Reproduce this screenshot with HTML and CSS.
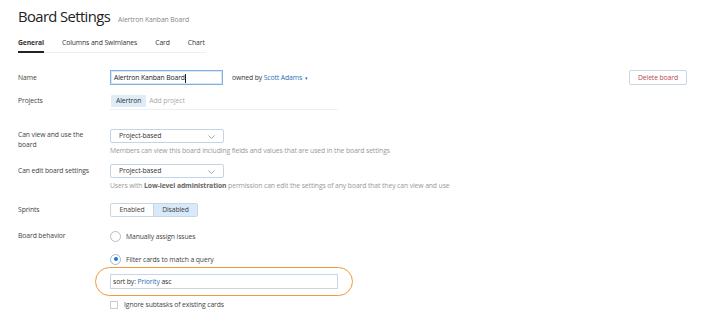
FILE: index.html
```html
<!DOCTYPE html>
<html>
<head>
<meta charset="utf-8">
<link rel="stylesheet" href="styles.css">
</head>
<body>
<div class="page">
  <div class="header">
    <h1 class="title">Board Settings</h1>
    <span class="subtitle">Alertron Kanban Board</span>
  </div>
  <div class="tabs">
    <span class="tab active">General</span>
    <span class="tab">Columns and Swimlanes</span>
    <span class="tab">Card</span>
    <span class="tab">Chart</span>
  </div>

  <div class="row row-name">
    <div class="label">Name</div>
    <div class="field name-field">
      <div class="text-input focused">Alertron Kanban Board<span class="caret"></span></div>
      <span class="owner">owned by <a class="link">Scott Adams</a> <span class="tri">▾</span></span>
    </div>
    <button class="btn-delete">Delete board</button>
  </div>

  <div class="row row-projects">
    <div class="label">Projects</div>
    <div class="field">
      <div class="project-picker">
        <span class="tag">Alertron</span><span class="placeholder">Add project</span>
      </div>
    </div>
  </div>

  <div class="row row-view">
    <div class="label">Can view and use the board</div>
    <div class="field">
      <div class="select">Project-based<svg class="chev" width="7" height="4" viewBox="0 0 7 4"><path d="M0.5 0.5 L3.5 3.5 L6.5 0.5" fill="none" stroke="#8a8f99" stroke-width="0.8"/></svg></div>
      <div class="help">Members can view this board including fields and values that are used in the board settings</div>
    </div>
  </div>

  <div class="row row-edit">
    <div class="label">Can edit board settings</div>
    <div class="field">
      <div class="select">Project-based<svg class="chev" width="7" height="4" viewBox="0 0 7 4"><path d="M0.5 0.5 L3.5 3.5 L6.5 0.5" fill="none" stroke="#8a8f99" stroke-width="0.8"/></svg></div>
      <div class="help">Users with <b>Low-level administration</b> permission can edit the settings of any board that they can view and use</div>
    </div>
  </div>

  <div class="row row-sprints">
    <div class="label">Sprints</div>
    <div class="field">
      <div class="toggle"><span class="opt">Enabled</span><span class="opt on">Disabled</span></div>
    </div>
  </div>

  <div class="row row-behavior">
    <div class="label">Board behavior</div>
    <div class="field">
      <div class="radio-line"><span class="radio"></span>Manually assign issues</div>
      <div class="radio-line second"><span class="radio checked"></span>Filter cards to match a query</div>
      <div class="query-wrap">
        <div class="query">sort by: <span class="kw">Priority</span> asc</div>
        <span class="ring"></span>
      </div>
      <div class="check-line"><span class="checkbox"></span>Ignore subtasks of existing cards</div>
    </div>
  </div>
</div>
</body>
</html>
```
FILE: styles.css
```css
* { box-sizing: border-box; }
html, body { margin: 0; padding: 0; background: #fff; }
body {
  font-family: "Open Sans", "Noto Sans", sans-serif;
  color: #333;
  font-size: 6.8px;
  letter-spacing: -0.1px;
}
.page { padding: 0 19px 0 18px; width: 706px; }

.header { display: flex; align-items: baseline; padding-top: 6px; height: 33px; }
.title { font-weight: 400; font-size: 14.8px; margin: 0; color: #222; letter-spacing: -0.6px; }
.subtitle { font-size: 6.8px; color: #888; margin-left: 8px; }

.tabs { display: flex; width: 188px; border-bottom: 1px solid #eceef1; height: 20px; align-items: center; white-space: nowrap; }
.tab { margin-right: 18px; height: 20px; line-height: 20px; color: #333; }
.tab.active { font-weight: 700; border-bottom: 2px solid #222; margin-bottom: -1px; }

.row { display: flex; align-items: flex-start; }
.label { width: 92px; flex: none; color: #444; line-height: 10px; padding-right: 12px; }
.field { flex: 1; }

.row-name { margin-top: 17px; align-items: center; }
.name-field { display: flex; align-items: center; }
.text-input {
  width: 113px; height: 15px; border: 1px solid #7fb0e0; box-shadow: 0 0 0 1px #d6e7f8 inset;
  line-height: 13px; padding-left: 3px; color: #222; position: relative;
}
.caret { display: inline-block; width: 1px; height: 9px; background: #222; vertical-align: middle; }
.owner { margin-left: 9px; color: #333; }
.link { color: #2a6fb6; }
.tri { color: #2a6fb6; font-size: 5px; vertical-align: middle; margin-left: 1px; }
.btn-delete {
  width: 58px; height: 15px; border: 1px solid #c9d6e4; background: #fff; color: #c0474d;
  font-family: inherit; font-size: 6.8px; letter-spacing: -0.1px; padding: 0; border-radius: 2px;
}

.row-projects { margin-top: 10px; }
.row-projects .label { padding-top: 1px; }
.project-picker { width: 228px; height: 15px; border-bottom: 1px solid #eef0f2; display: flex; align-items: flex-start; padding-left: 1px; }
.tag { background: #deecf8; color: #333; padding: 0 5px; height: 12px; line-height: 12px; border-radius: 1px; }
.placeholder { color: #aaa; margin-left: 3px; line-height: 12px; }

.row-view { margin-top: 19px; }
.row-view .label { margin-top: 1px; }
.select {
  width: 114px; height: 14px; border: 1px solid #c3d4e5; border-radius: 2px; padding-left: 8px;
  line-height: 12px; display: flex; align-items: center; justify-content: space-between; padding-right: 8px; color: #333;
}
.chev { margin-top: 1px; }
.help { color: #999; margin-top: 3px; line-height: 10px; white-space: nowrap; }
.help b { color: #666; }

.row-edit { margin-top: 8px; }
.row-edit .label { padding-top: 2px; }

.row-sprints { margin-top: 12px; align-items: center; }
.toggle { display: inline-flex; border: 1px solid #c8d6e4; border-radius: 2px; height: 14px; }
.opt { width: 42px; text-align: center; line-height: 12px; color: #444; }
.opt.on { width: 44px; background: #d8e9f9; border-left: 1px solid #c8d6e4; }

.row-behavior { margin-top: 13px; }
.row-behavior .label { padding-top: 1px; }
.radio-line { display: flex; align-items: center; height: 12px; color: #444; }
.radio-line.second { margin-top: 11px; }
.radio { width: 11px; height: 11px; border: 1px solid #b8bdc4; border-radius: 50%; margin-right: 5px; flex: none; position: relative; }
.radio.checked { border-color: #9fb9d4; }
.radio.checked::after { content: ""; position: absolute; left: 2.5px; top: 2.5px; width: 4px; height: 4px; border-radius: 50%; background: #1a73d9; }
.query-wrap { position: relative; margin-top: 9px; width: 228px; }
.query { height: 15px; border: 1px solid #c6d6e6; line-height: 13px; padding-left: 2px; color: #333; }
.kw { color: #2a6fb6; }
.ring {
  position: absolute; left: -15px; top: -7px; width: 258px; height: 29px;
  border: 1.5px solid #ef9a3a; border-radius: 15px;
}
.check-line { display: flex; align-items: center; margin-top: 11px; color: #444; }
.checkbox { width: 8px; height: 8px; border: 1px solid #c7ccd2; margin-right: 6px; flex: none; }
```
